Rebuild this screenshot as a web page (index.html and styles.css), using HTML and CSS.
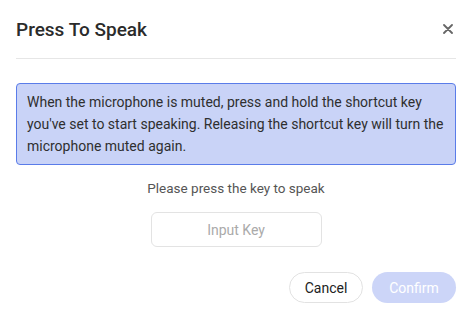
FILE: index.html
```html
<!DOCTYPE html>
<html lang="en">
<head>
<meta charset="utf-8">
<title>Press To Speak</title>
<link rel="stylesheet" href="styles.css">
</head>
<body>
<div class="dialog">
  <div class="header">
    <h1 class="title">Press To Speak</h1>
    <button class="close" aria-label="Close">
      <svg width="10" height="10" viewBox="0 0 10 10"><path d="M1 1L9 9M9 1L1 9" stroke="#666" stroke-width="1.8" stroke-linecap="round"/></svg>
    </button>
  </div>
  <div class="notice">When the microphone is muted, press and hold the shortcut key you've set to start speaking. Releasing the shortcut key will turn the microphone muted again.</div>
  <p class="hint">Please press the key to speak</p>
  <div class="key-row"><div class="key-input">Input Key</div></div>
  <div class="actions">
    <button class="btn btn-cancel">Cancel</button>
    <button class="btn btn-confirm">Confirm</button>
  </div>
</div>
</body>
</html>
```

FILE: styles.css
```css
* { box-sizing: border-box; }
html, body { margin: 0; background: #fff; }
body { font-family: Roboto, "Noto Sans", sans-serif; color: #333; }
.dialog { padding: 0 16px; width: 472px; }
.header {
  display: flex; align-items: center; justify-content: space-between;
  height: 59px; border-bottom: 1px solid #e6e6e6;
}
.title { margin: 0; font-size: 19px; font-weight: 500; color: #2b2b2b; }
.close { border: 0; background: none; padding: 0; margin-right: 3px; display: flex; cursor: pointer; }
.notice {
  margin-top: 24px; background: #c9d3f7; border: 1px solid #5a7ce9; border-radius: 4px;
  padding: 7px 10px; font-size: 14px; line-height: 22px; color: #2f2f2f;
}
.hint { margin: 12px 0 0; text-align: center; font-size: 13.5px; line-height: 22px; color: #555; }
.key-row { display: flex; justify-content: center; margin-top: 13px; }
.key-input {
  width: 171px; height: 35px; border: 1px solid #e3e3e3; border-radius: 6px;
  display: flex; align-items: center; justify-content: center; font-size: 14px; color: #aaa;
}
.actions { display: flex; justify-content: flex-end; gap: 9px; margin-top: 25px; }
.btn { height: 31px; border-radius: 16px; font-family: inherit; font-size: 14px; padding: 0; }
.btn-cancel { width: 74px; background: #fff; border: 1px solid #e2e2e2; color: #222; }
.btn-confirm { width: 84px; background: #ccd5f8; border: 0; color: #fff; }
```
